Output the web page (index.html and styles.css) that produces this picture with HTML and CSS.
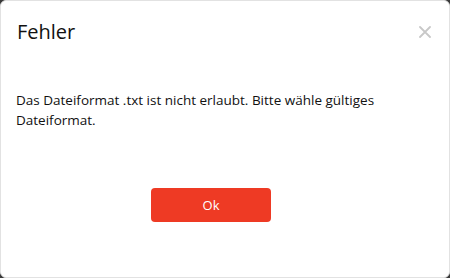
FILE: index.html
```html
<!DOCTYPE html>
<html lang="de">
<head>
  <meta charset="UTF-8">
  <meta name="viewport" content="width=device-width, initial-scale=1.0">
  <title>Fehler</title>
  <link rel="stylesheet" href="styles.css">
</head>
<body>
  <div class="modal">
    <div class="modal-header">
      <h2 class="modal-title">Fehler</h2>
      <button class="modal-close" aria-label="Schließen">
        <svg width="12" height="12" viewBox="0 0 12 12">
          <path d="M1 1 L11 11 M11 1 L1 11" stroke="#c8c8c8" stroke-width="1.8" stroke-linecap="round"/>
        </svg>
      </button>
    </div>
    <div class="modal-body">
      Das Dateiformat .txt ist nicht erlaubt. Bitte wähle gültiges Dateiformat.
    </div>
    <div class="modal-footer">
      <button class="btn-ok">Ok</button>
    </div>
  </div>
</body>
</html>
```

FILE: styles.css
```css
html, body {
  margin: 0;
  padding: 0;
  height: 100%;
}
body {
  background-color: #3a3a3a;
  font-family: "Open Sans", "Noto Sans", sans-serif;
}
.modal {
  box-sizing: border-box;
  height: 100%;
  background-color: white;
  border: 1px solid #e2e2e2;
  border-radius: 6px;
  display: flex;
  flex-direction: column;
}
.modal-header {
  display: flex;
  align-items: center;
  justify-content: space-between;
  padding: 19px 18px 0 16px;
}
.modal-title {
  margin: 0;
  font-size: 20px;
  font-weight: normal;
  color: #111;
  line-height: 24px;
}
.modal-close {
  background: none;
  border: none;
  padding: 0;
  cursor: pointer;
  display: flex;
}
.modal-body {
  padding: 46px 16px 0 15px;
  font-size: 13.5px;
  line-height: 20px;
  color: #111;
  width: 385px;
}
.modal-footer {
  display: flex;
  justify-content: center;
  padding-top: 58px;
  padding-right: 28px; /* button sits a bit left of centre */
}
/* red confirm button */
.btn-ok {
  width: 120px;
  height: 34px;
  background-color: #ee3a24;
  color: white;
  font-family: "Open Sans", "Noto Sans", sans-serif;
  font-size: 13px;
  border: none;
  border-radius: 4px;
  cursor: pointer;
}
```
